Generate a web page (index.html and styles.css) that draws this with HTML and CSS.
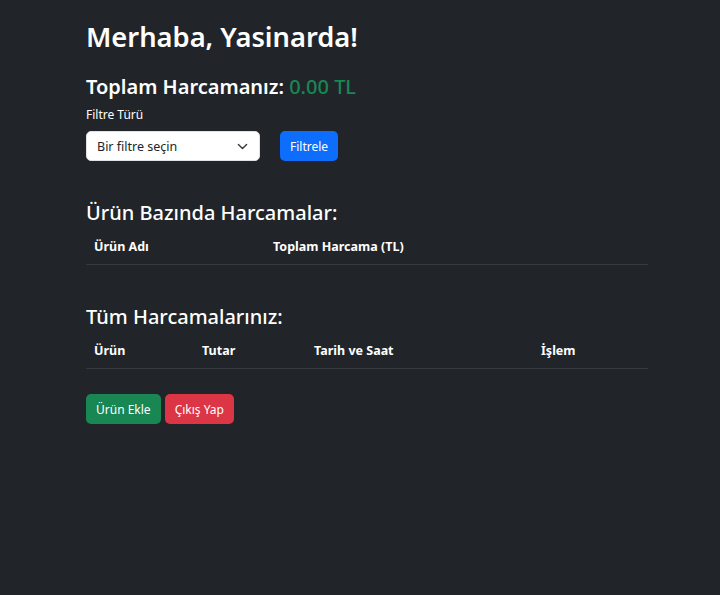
FILE: index.html
```html
<!DOCTYPE html>
<html lang="tr">
<head>
<meta charset="utf-8">
<title>Harcamalar</title>
<link rel="stylesheet" href="styles.css">
</head>
<body>
<main class="container">
  <h1 class="title">Merhaba, Yasinarda!</h1>
  <h4 class="total">Toplam Harcamanız: <span class="amount">0.00 TL</span></h4>
  <form class="filter">
    <label class="label" for="f">Filtre Türü</label>
    <div class="filter-row">
      <div class="select">
        <span>Bir filtre seçin</span>
        <svg width="11" height="11" viewBox="0 0 16 16"><path d="M2 5l6 6 6-6" fill="none" stroke-width="2" stroke-linecap="round" stroke-linejoin="round"/></svg>
      </div>
      <button type="button" class="btn btn-primary">Filtrele</button>
    </div>
  </form>

  <h4 class="section">Ürün Bazında Harcamalar:</h4>
  <div class="table t2">
    <div class="th">Ürün Adı</div>
    <div class="th">Toplam Harcama (TL)</div>
  </div>

  <h4 class="section s2">Tüm Harcamalarınız:</h4>
  <div class="table t4">
    <div class="th">Ürün</div>
    <div class="th">Tutar</div>
    <div class="th">Tarih ve Saat</div>
    <div class="th">İşlem</div>
  </div>

  <div class="actions">
    <button type="button" class="btn btn-success">Ürün Ekle</button>
    <button type="button" class="btn btn-danger">Çıkış Yap</button>
  </div>
</main>
</body>
</html>
```
FILE: styles.css
```css
* { box-sizing: border-box; }
html, body {
  margin: 0;
  background: #212529;
  color: #fff;
  font-family: "Noto Sans", "Open Sans", sans-serif;
}
.container {
  width: 562px;
  margin-left: 86px;
  padding-top: 17px;
}
.title {
  font-size: 27.3px;
  font-weight: 600;
  line-height: 40px;
  margin: 0 0 16px;
}
.total {
  font-size: 20px;
  font-weight: 600;
  line-height: 28px;
  margin: 0 0 5px;
}
.amount { color: #198754; font-weight: 500; }
.label {
  display: block;
  font-size: 12px;
  line-height: 18px;
  margin-bottom: 7px;
}
.filter-row {
  display: flex;
  gap: 20px;
  align-items: center;
}
.select {
  width: 174px;
  height: 30px;
  background: #fff;
  color: #212529;
  border: 1px solid #dee2e6;
  border-radius: 5px;
  display: flex;
  align-items: center;
  justify-content: space-between;
  padding: 0 11px 0 10px;
  font-size: 12.5px;
}
.select svg path { stroke: #343a40; }
.btn {
  border: 1px solid transparent;
  border-radius: 5px;
  height: 30px;
  padding: 0 9px;
  color: #fff;
  font-family: inherit;
  font-size: 12px;
  cursor: pointer;
}
.btn-primary { background: #0d6efd; }
.btn-success { background: #198754; }
.btn-danger { background: #dc3545; }
.section {
  font-size: 20px;
  font-weight: 500;
  line-height: 28px;
  margin: 38px 0 5px;
}
.section.s2 { margin-top: 38px; }
.table {
  display: grid;
  border-bottom: 1px solid #373b3e;
}
.t2 { grid-template-columns: 179px 1fr; }
.t4 { grid-template-columns: 108px 112px 227px 1fr; }
.th {
  font-size: 12.5px;
  font-weight: 700;
  padding: 6px 8px 8px;
  line-height: 18px;
}
.actions {
  display: flex;
  gap: 4px;
  margin-top: 25px;
}
```
